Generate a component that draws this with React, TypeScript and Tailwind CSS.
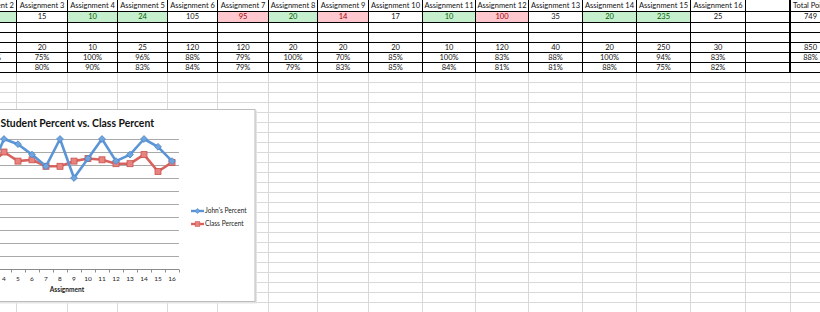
import React from "react";

const HEADERS = [
  "Assignment 2", "Assignment 3", "Assignment 4", "Assignment 5", "Assignment 6",
  "Assignment 7", "Assignment 8", "Assignment 9", "Assignment 10", "Assignment 11",
  "Assignment 12", "Assignment 13", "Assignment 14", "Assignment 15", "Assignment 16",
  "", "Total Points",
];

type Tone = "g" | "r" | "";

const SCORES: [string, Tone][] = [
  ["20", "g"], ["15", ""], ["10", "g"], ["24", "g"], ["105", ""], ["95", "r"],
  ["20", "g"], ["14", "r"], ["17", ""], ["10", "g"], ["100", "r"], ["35", ""],
  ["20", "g"], ["235", "g"], ["25", ""], ["", ""], ["749", ""],
];
const POSSIBLE = ["20", "20", "10", "25", "120", "120", "20", "20", "20", "10", "120", "40", "20", "250", "30", "", "850"];
const JOHN_PCT = ["100%", "75%", "100%", "96%", "88%", "79%", "100%", "70%", "85%", "100%", "83%", "88%", "100%", "94%", "83%", "", "88%"];
const CLASS_PCT = ["85%", "80%", "90%", "83%", "84%", "79%", "79%", "83%", "85%", "84%", "81%", "81%", "88%", "75%", "82%", "", ""];
const BLANK = HEADERS.map(() => "");

const TABLE: [string, Tone][][] = [
  HEADERS.map((h) => [h, ""]),
  SCORES,
  BLANK.map((v) => [v, ""]),
  BLANK.map((v) => [v, ""]),
  POSSIBLE.map((v) => [v, ""]),
  JOHN_PCT.map((v) => [v, ""]),
  CLASS_PCT.map((v) => [v, ""]),
];

const ROW_COUNT = 31;

function Cell({ r, c }: { r: number; c: number }) {
  const inTable = r < TABLE.length;
  const [text, tone] = inTable ? TABLE[r][c] : ["", ""];
  const isTotal = c === HEADERS.length - 1;
  const isGap = c === HEADERS.length - 2;

  let cls = "flex items-center overflow-visible whitespace-nowrap border-b ";
  cls += inTable ? "border-black " : "border-[#d9d9d9] ";
  cls += inTable && isGap ? "border-r-2 border-r-black " : inTable ? "border-r " : "border-r border-r-[#d9d9d9] ";
  cls += r === 0 && isTotal ? "justify-start pl-[2px] " : "justify-center ";
  if (tone === "g") cls += "bg-[#c6efce] text-[#006100] ";
  else if (tone === "r") cls += "bg-[#ffc7ce] text-[#9c0006] ";
  else cls += "text-[#111] ";

  return <div className={cls}>{text}</div>;
}

function Chart() {
  const x = (n: number) => 14 * n - 52;
  const y = (v: number) => 269 - v * 1.3;
  const john = [90, 100, 75, 100, 96, 88, 79, 100, 70, 85, 100, 83, 88, 100, 94, 83];
  const cls = [85, 85, 80, 90, 83, 84, 79, 79, 83, 85, 84, 81, 81, 88, 75, 82];
  const johnPts = john.map((v, i) => `${x(i + 1)},${y(v)}`).join(" ");
  const clsPts = cls.map((v, i) => `${x(i + 1)},${y(v)}`).join(" ");
  const blue = "#5b95d6";
  const red = "#d8625d";

  const diamond = (cx: number, cy: number, r: number) =>
    `${cx},${cy - r} ${cx + r},${cy} ${cx},${cy + r} ${cx - r},${cy}`;

  return (
    <div className="absolute left-[-20px] top-[109px] w-[278px] h-[196px]">
      <svg width="278" height="196" viewBox="-20 109 278 196" fontFamily="Lato, 'Liberation Sans', sans-serif">
        <rect x="-30" y="110.5" width="287" height="193" fill="#e4e4e4" />
        <rect x="-30" y="109.5" width="285" height="192" fill="#fff" stroke="#bdbdbd" />

        <text x="0.5" y="127" fontSize="10.4" fontWeight="700" fill="#111">
          Student Percent vs. Class Percent
        </text>

        {[10, 20, 30, 40, 50, 60, 70, 80, 90, 100].map((v) => (
          <line key={v} x1="-45" x2="179" y1={Math.round(y(v)) + 0.5} y2={Math.round(y(v)) + 0.5} stroke="#a9a9a9" strokeWidth="1" />
        ))}
        <line x1="-45" x2="179" y1="269.5" y2="269.5" stroke="#8c8c8c" strokeWidth="1" />
        {Array.from({ length: 17 }).map((_, i) => (
          <line key={i} x1={x(i + 1) - 7 + 0.5} x2={x(i + 1) - 7 + 0.5} y1="269.5" y2="272.5" stroke="#8c8c8c" strokeWidth="1" />
        ))}

        {Array.from({ length: 16 }).map((_, i) => (
          <text key={i} x={x(i + 1)} y="280.5" fontSize="6.5" textAnchor="middle" fill="#222">
            {i + 1}
          </text>
        ))}
        <text x="67" y="291.5" fontSize="6.6" fontWeight="700" textAnchor="middle" fill="#222">
          Assignment
        </text>

        <polyline points={clsPts} fill="none" stroke={red} strokeWidth="2.6" strokeLinejoin="round" />
        {cls.map((v, i) => (
          <rect key={i} x={x(i + 1) - 3} y={y(v) - 3} width="6" height="6" fill="#e8837f" stroke="#c8524d" strokeWidth="0.8" />
        ))}
        <polyline points={johnPts} fill="none" stroke={blue} strokeWidth="2.6" strokeLinejoin="round" />
        {john.map((v, i) => (
          <polygon key={i} points={diamond(x(i + 1), y(v), 3.4)} fill="#6ea5e0" stroke="#4b84c6" strokeWidth="0.8" />
        ))}

        <line x1="191" x2="204" y1="211" y2="211" stroke={blue} strokeWidth="2.4" />
        <polygon points={diamond(197.5, 211, 2.6)} fill="#6ea5e0" stroke="#4b84c6" strokeWidth="0.6" />
        <text x="205" y="213.2" fontSize="6.6" fill="#222">John's Percent</text>

        <line x1="191" x2="204" y1="224" y2="224" stroke={red} strokeWidth="2.4" />
        <rect x="195.2" y="221.7" width="4.6" height="4.6" fill="#e8837f" stroke="#c8524d" strokeWidth="0.6" />
        <text x="205" y="226.2" fontSize="6.6" fill="#222">Class Percent</text>
      </svg>
    </div>
  );
}

export default function App() {
  return (
    <div className="relative w-[820px] h-[312px] overflow-hidden bg-white font-['Lato',sans-serif] text-[7.5px] leading-none">
      <div className="grid ml-[-33px] w-max grid-cols-[50px_51px_50px_50px_50px_51px_49px_51px_54px_53px_53px_54px_54px_54px_55px_45px_40px] grid-rows-[12px_11px_repeat(29,10px)]">
        {Array.from({ length: ROW_COUNT }).map((_, r) =>
          HEADERS.map((_, c) => <Cell key={`${r}-${c}`} r={r} c={c} />)
        )}
      </div>
      <Chart />
    </div>
  );
}
